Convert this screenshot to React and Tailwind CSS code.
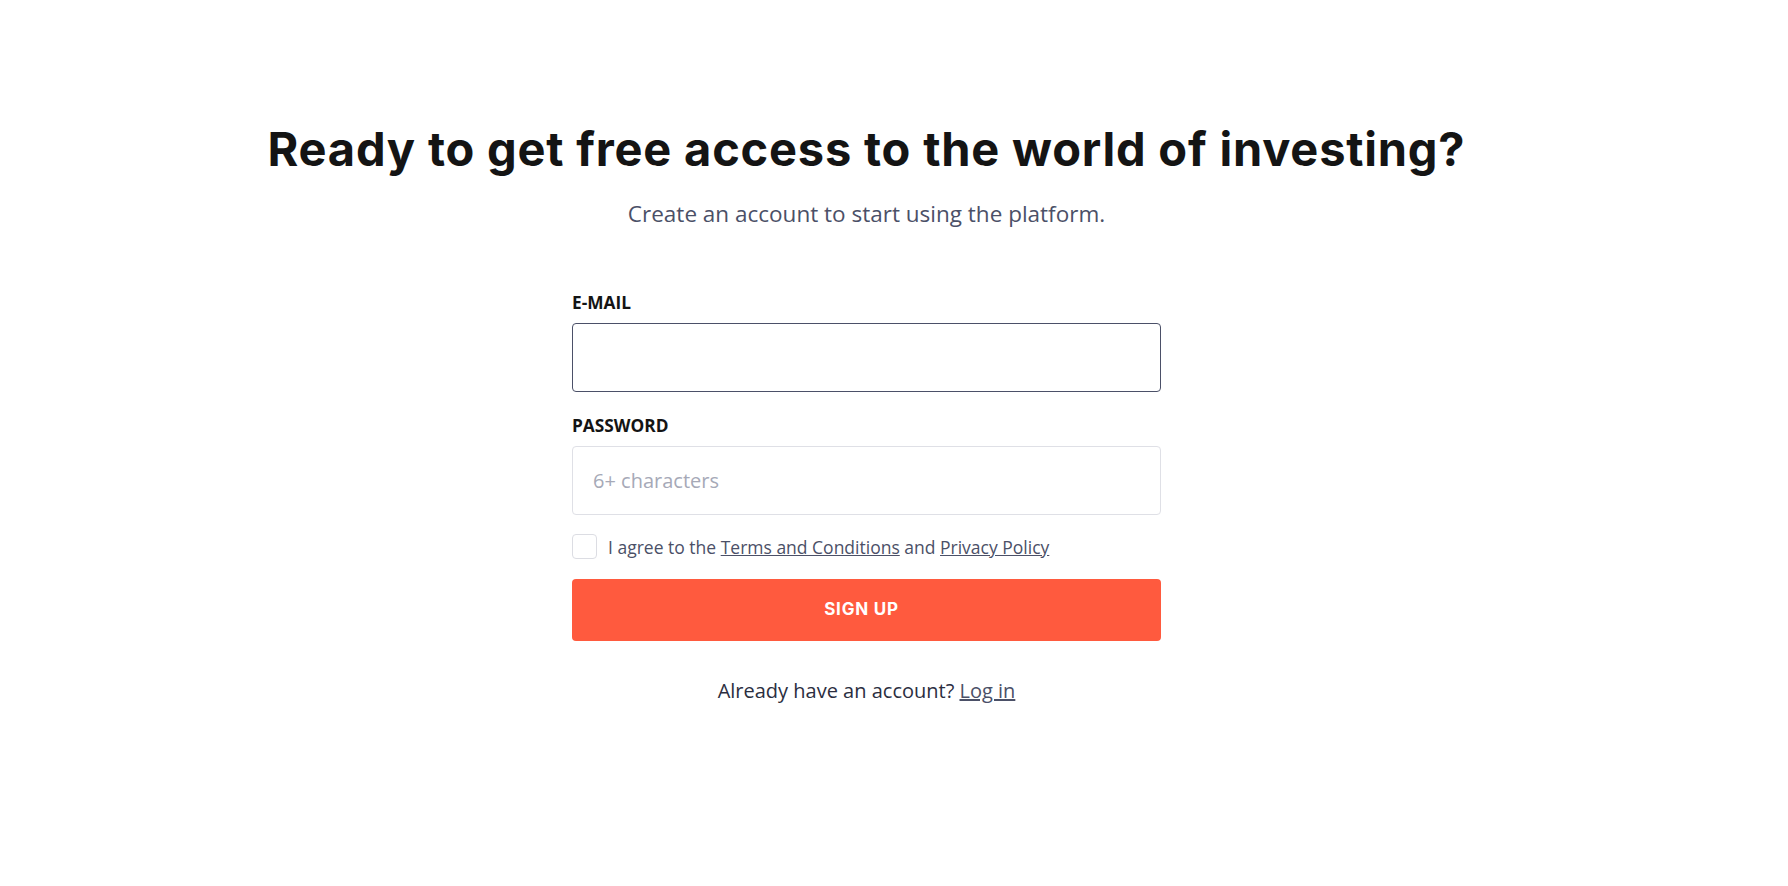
import { useState } from "react";

export default function App() {
  const [email, setEmail] = useState("");
  const [password, setPassword] = useState("");
  const [agree, setAgree] = useState(false);

  return (
    <div className="min-h-screen bg-white font-['Open_Sans',sans-serif] pr-[55px]">
      <div className="flex flex-col items-center pt-[121px]">
        <h1 className="font-['Inter',sans-serif] font-bold text-[47px] leading-[56px] text-[#141414] tracking-[0.8px]">
          Ready to get free access to the world of investing?
        </h1>
        <p className="mt-[22px] text-[22.5px] leading-[30px] text-[#4b5067]">
          Create an account to start using the platform.
        </p>

        <form className="w-[589px] mt-[62px]" onSubmit={(e) => e.preventDefault()}>
          <label className="block text-[17.3px] leading-[24px] font-bold text-[#141414]">
            E-MAIL
          </label>
          <input
            type="email"
            value={email}
            onChange={(e) => setEmail(e.target.value)}
            className="mt-[8px] block w-full h-[69px] rounded-[4px] border border-[#4b5068] px-[20px] text-[20px] outline-none"
          />

          <label className="block mt-[22px] text-[17.3px] leading-[24px] font-bold text-[#141414]">
            PASSWORD
          </label>
          <input
            type="password"
            value={password}
            placeholder="6+ characters"
            onChange={(e) => setPassword(e.target.value)}
            className="mt-[8px] block w-full h-[69px] rounded-[4px] border border-[#dfe0e6] px-[20px] text-[20px] outline-none placeholder:text-[#a6a9b7]"
          />

          <div className="mt-[18px] flex items-center gap-[11px]">
            <button
              type="button"
              onClick={() => setAgree(!agree)}
              className="shrink-0 w-[25px] h-[25px] rounded-[4px] border border-[#dcdde3] bg-white"
            />
            <span className="text-[17.5px] leading-[26px] text-[#4b5067] pt-[1px]">
              I agree to the <a href="#" className="underline">Terms and Conditions</a> and{" "}
              <a href="#" className="underline">Privacy Policy</a>
            </span>
          </div>

          <button
            type="submit"
            className="mt-[19px] w-full h-[62px] rounded-[4px] bg-[#ff5a3e] pr-[10px] text-white font-['Inter',sans-serif] font-bold text-[17px] tracking-[0.8px]"
          >
            SIGN UP
          </button>

          <p className="mt-[36px] text-center text-[20px] leading-[28px] text-[#2b2e3f]">
            Already have an account? <a href="#" className="underline text-[#4b5067]">Log in</a>
          </p>
        </form>
      </div>
    </div>
  );
}
